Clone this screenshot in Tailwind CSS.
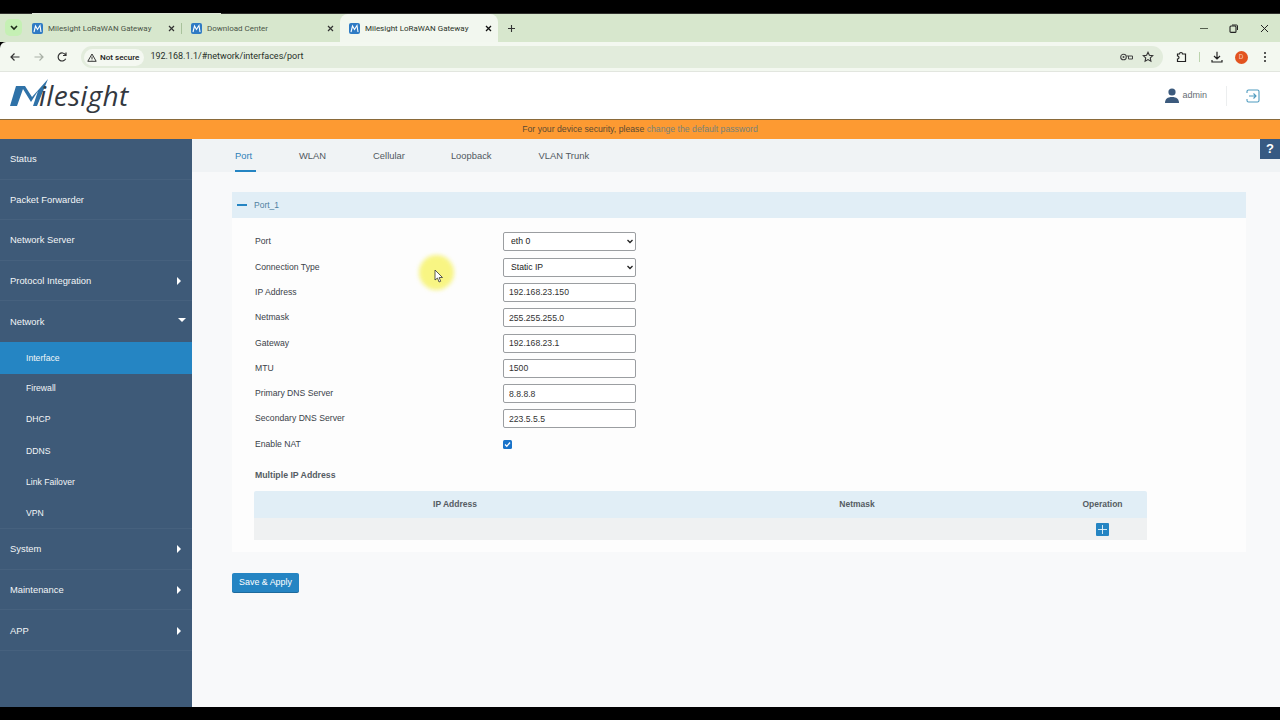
<!DOCTYPE html>
<html lang="en">
<head>
<meta charset="UTF-8">
<script src="https://cdn.jsdelivr.net/npm/@tailwindcss/browser@4"></script>
<title>Milesight LoRaWAN Gateway</title>
</head>
<body class="w-[1280px] h-[720px] overflow-hidden bg-black font-['Liberation_Sans',sans-serif] flex flex-col relative">
  <!-- video letterbox top -->
  <div class="h-[13px] shrink-0 bg-black"></div>
  <div class="h-px shrink-0 bg-[#30302e]"><div class="ml-[32px] w-[189px] h-px bg-[#dfe6da]"></div></div>

  <!-- tab strip -->
  <div class="h-[28px] shrink-0 bg-[#d7e7cd] flex items-start pl-[5px] font-['Roboto',sans-serif] text-[#4a5547] text-[8px]">
    <div class="w-[17px] h-[17px] mt-[5px] rounded-[5px] bg-[#c5f0b4] flex items-center justify-center">
      <svg width="8" height="6" viewBox="0 0 8 6"><path d="M1 1l3 3 3-3" fill="none" stroke="#1d2a18" stroke-width="1.6"/></svg>
    </div>
    <div class="w-[149px] h-[28px] ml-[10px] pt-px flex items-center gap-[5px]">
      <svg class="shrink-0" width="11" height="11" viewBox="0 0 11 11"><rect width="11" height="11" rx="2" fill="#2f7bc4"/><path d="M2 9l1.500-6 2 3.500L8 2.500 9 9" fill="none" stroke="#fff" stroke-width="1.100"/></svg>
      <span class="w-[115px]">Milesight LoRaWAN Gateway</span>
      <svg width="7" height="7" viewBox="0 0 7 7"><path d="M1 1l5 5M6 1L1 6" stroke="#333" stroke-width="1.200"/></svg>
    </div>
    <div class="w-px h-[11px] mt-[9px] bg-[#a9c29c]"></div>
    <div class="w-[149px] h-[28px] ml-[9px] pt-px flex items-center gap-[5px]">
      <svg class="shrink-0" width="11" height="11" viewBox="0 0 11 11"><rect width="11" height="11" rx="2" fill="#2f7bc4"/><path d="M2 9l1.500-6 2 3.500L8 2.500 9 9" fill="none" stroke="#fff" stroke-width="1.100"/></svg>
      <span class="w-[115px]">Download Center</span>
      <svg width="7" height="7" viewBox="0 0 7 7"><path d="M1 1l5 5M6 1L1 6" stroke="#333" stroke-width="1.200"/></svg>
    </div>
    <div class="w-[158px] h-[28px] pl-[9px] pt-px flex items-center gap-[5px] bg-[#f2f7ef] rounded-t-[8px] text-[#2a3328]">
      <svg class="shrink-0" width="11" height="11" viewBox="0 0 11 11"><rect width="11" height="11" rx="2" fill="#2f7bc4"/><path d="M2 9l1.500-6 2 3.500L8 2.500 9 9" fill="none" stroke="#fff" stroke-width="1.100"/></svg>
      <span class="w-[115px]">Milesight LoRaWAN Gateway</span>
      <svg width="7" height="7" viewBox="0 0 7 7"><path d="M1 1l5 5M6 1L1 6" stroke="#111" stroke-width="1.300"/></svg>
    </div>
    <svg class="mt-[10px] ml-[9px]" width="9" height="9" viewBox="0 0 9 9"><path d="M4.500 1v7M1 4.500h7" stroke="#333" stroke-width="1.100"/></svg>
    <div class="ml-auto mt-[10px] flex items-center gap-[21.500px] pr-[11.500px]">
      <div class="w-[8px] h-[1.500px] bg-[#55604f]"></div>
      <svg width="9" height="9" viewBox="0 0 9 9"><rect x="1" y="2" width="6" height="6.400" rx="1" fill="none" stroke="#222" stroke-width="1.100"/><path d="M3 1h4.500a1 1 0 0 1 1 1v4" fill="none" stroke="#222"/></svg>
      <svg width="9" height="9" viewBox="0 0 9 9"><path d="M1 1l7 7M8 1L1 8" stroke="#222"/></svg>
    </div>
  </div>

  <!-- browser toolbar -->
  <div class="h-[30px] shrink-0 bg-[#f3f8f0] rounded-tl-[6px] flex items-center pl-[9px] pt-px border-b border-[#e2e6df] font-['Roboto',sans-serif]">
    <svg width="12" height="12" viewBox="0 0 12 12"><path d="M10.500 6H2M5.500 2.500L2 6l3.500 3.500" fill="none" stroke="#333" stroke-width="1.200"/></svg>
    <svg class="ml-[12px]" width="12" height="12" viewBox="0 0 12 12"><path d="M1.500 6H10M6.500 2.500L10 6l-3.500 3.500" fill="none" stroke="#a9b0a6" stroke-width="1.200"/></svg>
    <svg class="ml-[11px]" width="12" height="12" viewBox="0 0 12 12"><path d="M9.700 7.800A4 4 0 1 1 9.500 3.800M10 1.500v3H7" fill="none" stroke="#333" stroke-width="1.200"/></svg>
    <div class="ml-[13px] w-[1082px] h-[22px] rounded-full bg-[#e2ecdc] flex items-center pl-[3px] pr-[9px]">
      <div class="h-[17px] pl-[3px] pr-[5px] rounded-full bg-[#f4f8f1] flex items-center gap-[3px] text-[8.100px] font-medium text-[#222]">
        <svg width="10" height="9" viewBox="0 0 10 9"><path d="M5 1L.8 8.300h8.400z M5 3.500v2.500M5 6.600v.7" fill="none" stroke="#222" stroke-width=".9"/></svg>
        <span>Not secure</span>
      </div>
      <span class="ml-[6px] text-[9px] text-[#28312a]">192.168.1.1/#network/interfaces/port</span>
      <svg class="ml-auto" width="13" height="8" viewBox="0 0 13 8"><circle cx="3.500" cy="4" r="2.800" fill="none" stroke="#444" stroke-width="1.100"/><circle cx="3.500" cy="4" r="1" fill="#444"/><path d="M6.500 3h6v3h-4V3" fill="none" stroke="#444"/></svg>
      <svg class="ml-[9px]" width="12" height="12" viewBox="0 0 12 12"><path d="M6 1.300l1.400 3 3.300.4-2.400 2.200.6 3.300L6 8.600l-2.900 1.600.6-3.300L1.300 4.700l3.300-.4z" fill="none" stroke="#333" stroke-width="1.100"/></svg>
    </div>
    <svg class="ml-[12px]" width="12" height="13" viewBox="0 0 12 13"><path d="M2.500 3h2a1.500 1.500 0 0 1 3 0h3v7.500h-8V8a1.500 1.500 0 0 0 0-3z" fill="none" stroke="#222" stroke-width="1.200"/></svg>
    <div class="ml-[12px] w-px h-[10px] bg-[#bcd4ae]"></div>
    <svg class="ml-[11px]" width="12" height="12" viewBox="0 0 12 12"><path d="M6 .8v7M3 5l3 3 3-3M1 9v2h10V9" fill="none" stroke="#222" stroke-width="1.200"/></svg>
    <div class="ml-[11.500px] w-[13px] h-[13px] rounded-full bg-[#e2531f] text-[#f7c9b4] text-[7px] flex items-center justify-center">D</div>
    <div class="ml-[16.500px] flex flex-col gap-[2px]">
      <i class="block w-[2px] h-[2px] rounded-full bg-[#222]"></i>
      <i class="block w-[2px] h-[2px] rounded-full bg-[#222]"></i>
      <i class="block w-[2px] h-[2px] rounded-full bg-[#222]"></i>
    </div>
  </div>

  <!-- gateway header -->
  <header class="h-[48px] shrink-0 bg-white flex items-center pl-[10px] pr-[20px] border-b border-[#8a6a3a] relative z-10">
    <div class="relative h-[36px] w-[125px]">
      <svg class="absolute left-0 top-[1px]" width="40" height="28" viewBox="0 0 40 28"><path d="M0 27L6 7h9l7 11L38 0 27 27h-4l5-15-7 11-8-13-6 17z" fill="#2f72a8"/></svg>
      <span class="absolute left-[29px] -top-[1px] text-[28px] leading-[36px] italic text-[#33383f] font-['Open_Sans',sans-serif] font-normal tracking-[0.3px]">ilesight</span>
    </div>
    <svg class="ml-auto" width="14" height="15" viewBox="0 0 14 15"><circle cx="7" cy="4" r="3.600" fill="#3c5a7d"/><path d="M0 15c0-4 2.500-6 7-6s7 2 7 6z" fill="#3c5a7d"/></svg>
    <span class="ml-[3px] text-[9px] text-[#666d74]">admin</span>
    <div class="ml-[19px] w-px h-[20px] bg-[#eceeef]"></div>
    <svg class="ml-[19px]" width="14" height="14" viewBox="0 0 14 14"><path d="M1 4V2.500A1.500 1.500 0 0 1 2.500 1h9A1.500 1.500 0 0 1 13 2.500v9a1.500 1.500 0 0 1-1.500 1.500h-9A1.500 1.500 0 0 1 1 11.500V10M3 7h7M7.500 4.500L10 7l-2.500 2.500" fill="none" stroke="#4f9bbf" stroke-width="1.100"/></svg>
  </header>

  <!-- notice -->
  <div class="h-[19px] shrink-0 bg-[#fd9a32] flex items-center justify-center text-[8.700px] text-[#5a4a33]">
    For your device security, please&nbsp;<span class="text-[#76827a]">change the default password</span>
  </div>

  <div class="h-[568px] shrink-0 flex text-[8.640px] text-[#3b4249]">
    <!-- sidebar -->
    <nav class="w-[192px] shrink-0 bg-[#3e5a78] text-[#f2f5f7] text-[9.400px]">
      <div class="h-[40.600px] pt-px flex items-center pl-[10px] border-b border-[#46617e]">Status</div>
      <div class="h-[40.600px] pt-px flex items-center pl-[10px] border-b border-[#46617e]">Packet Forwarder</div>
      <div class="h-[40.600px] pt-px flex items-center pl-[10px] border-b border-[#46617e]">Network Server</div>
      <div class="h-[40.600px] pt-px flex items-center pl-[10px] pr-[11px] justify-between border-b border-[#46617e]">Protocol Integration<span class="w-0 h-0 border-y-[4px] border-y-transparent border-l-[4px] border-l-white"></span></div>
      <div class="h-[40.600px] pt-px flex items-center pl-[10px] pr-[6px] justify-between">Network<span class="w-0 h-0 -mt-[4px] border-x-[4.500px] border-x-transparent border-t-[4px] border-t-white"></span></div>
      <div class="h-[32px] pt-px flex items-center pl-[26px] bg-[#2585c3] text-[8.650px] font-medium">Interface</div>
      <div class="h-[29px] pt-px flex items-center pl-[26px] text-[8.650px]">Firewall</div>
      <div class="h-[31.300px] mt-[1px] flex items-center pl-[26px] text-[8.650px]">DHCP</div>
      <div class="h-[31.300px] pt-px flex items-center pl-[26px] text-[8.650px]">DDNS</div>
      <div class="h-[31.300px] flex items-center pl-[26px] text-[8.650px]">Link Failover</div>
      <div class="h-[31.300px] flex items-center pl-[26px] text-[8.650px] border-b border-[#46617e]">VPN</div>
      <div class="h-[40.600px] pt-px flex items-center pl-[10px] pr-[11px] justify-between border-b border-[#46617e]">System<span class="w-0 h-0 border-y-[4px] border-y-transparent border-l-[4px] border-l-white"></span></div>
      <div class="h-[40.600px] pt-px flex items-center pl-[10px] pr-[11px] justify-between border-b border-[#46617e]">Maintenance<span class="w-0 h-0 border-y-[4px] border-y-transparent border-l-[4px] border-l-white"></span></div>
      <div class="h-[40.600px] pt-px flex items-center pl-[10px] pr-[11px] justify-between border-b border-[#46617e]">APP<span class="w-0 h-0 border-y-[4px] border-y-transparent border-l-[4px] border-l-white"></span></div>
    </nav>

    <!-- main -->
    <main class="flex-1 bg-[#f8f9fa] relative">
      <div class="h-[33px] bg-[#f0f3f5] flex pl-[43px] gap-[43px] text-[9.400px] text-[#50585f]">
        <div class="h-[33px] pt-[10px] text-[#2d80b8] border-b-2 border-[#2585c3] w-[21px]">Port</div>
        <div class="pt-[10px]">WLAN</div>
        <div class="pt-[10px] ml-[4px]">Cellular</div>
        <div class="pt-[10px] ml-[3px]">Loopback</div>
        <div class="pt-[10px] ml-[4px]">VLAN Trunk</div>
      </div>
      <div class="absolute right-0 top-0 w-[20px] h-[20px] bg-[#375a83] text-white font-bold text-[13px] flex items-center justify-center">?</div>

      <section class="ml-[40px] mr-[34px] mt-[20px] bg-[#fdfdfd] h-[360px]">
        <div class="h-[26px] bg-[#e1eef6] flex items-center pl-[5px] gap-[7px] text-[#4f7f9f] text-[8.500px]">
          <span class="w-[10px] h-[2px] bg-[#2585c3]"></span>
          <span>Port_1</span>
        </div>
        <div class="ml-[22px] mt-[14.400px] flex flex-col gap-[6.300px]">
          <div class="h-[19px] flex items-center"><label class="w-[248px] ml-px">Port</label>
            <div class="relative">
              <select class="block appearance-none w-[133px] h-[19px] bg-white border border-[#9b9ea1] rounded-[2px] px-[7px] text-[#222]"><option>eth 0</option></select>
              <svg class="absolute right-[3px] top-[7px]" width="6" height="5" viewBox="0 0 6 5"><path d="M.5 1L3 3.500 5.500 1" fill="none" stroke="#222" stroke-width="1.300"/></svg>
            </div></div>
          <div class="h-[19px] flex items-center"><label class="w-[248px] ml-px">Connection Type</label>
            <div class="relative">
              <select class="block appearance-none w-[133px] h-[19px] bg-white border border-[#9b9ea1] rounded-[2px] px-[7px] text-[#222]"><option>Static IP</option></select>
              <svg class="absolute right-[3px] top-[7px]" width="6" height="5" viewBox="0 0 6 5"><path d="M.5 1L3 3.500 5.500 1" fill="none" stroke="#222" stroke-width="1.300"/></svg>
            </div></div>
          <div class="h-[19px] flex items-center"><label class="w-[248px] ml-px">IP Address</label>
            <input class="w-[133px] h-[19px] bg-white border border-[#9b9ea1] rounded-[2px] px-[5px] text-[#333]" value="192.168.23.150"></div>
          <div class="h-[19px] flex items-center"><label class="w-[248px] ml-px">Netmask</label>
            <input class="w-[133px] h-[19px] bg-white border border-[#9b9ea1] rounded-[2px] px-[5px] text-[#333]" value="255.255.255.0"></div>
          <div class="h-[19px] flex items-center"><label class="w-[248px] ml-px">Gateway</label>
            <input class="w-[133px] h-[19px] bg-white border border-[#9b9ea1] rounded-[2px] px-[5px] text-[#333]" value="192.168.23.1"></div>
          <div class="h-[19px] flex items-center"><label class="w-[248px] ml-px">MTU</label>
            <input class="w-[133px] h-[19px] bg-white border border-[#9b9ea1] rounded-[2px] px-[5px] text-[#333]" value="1500"></div>
          <div class="h-[19px] flex items-center"><label class="w-[248px] ml-px">Primary DNS Server</label>
            <input class="w-[133px] h-[19px] bg-white border border-[#9b9ea1] rounded-[2px] px-[5px] text-[#333]" value="8.8.8.8"></div>
          <div class="h-[19px] flex items-center"><label class="w-[248px] ml-px">Secondary DNS Server</label>
            <input class="w-[133px] h-[19px] bg-white border border-[#9b9ea1] rounded-[2px] px-[5px] text-[#333]" value="223.5.5.5"></div>
          <div class="h-[19px] flex items-center"><label class="w-[248px] ml-px">Enable NAT</label>
            <span class="w-[9px] h-[9px] mt-px rounded-[1.500px] bg-[#1a73c9] flex items-center justify-center"><svg width="7" height="7" viewBox="0 0 7 7"><path d="M1 3.500l1.800 1.800L6 1.500" fill="none" stroke="#fff" stroke-width="1.300"/></svg></span></div>
        </div>
        <div class="ml-[23px] mt-[15.600px] font-bold text-[8.740px] text-[#555c63]">Multiple IP Address</div>
        <div class="ml-[22px] mt-[8.600px] w-[893px]">
          <div class="h-[27px] bg-[#e1eef6] rounded-t-[2px] flex items-center font-bold text-[8.500px] text-[#555c63] text-center">
            <span class="w-[402px]">IP Address</span><span class="w-[402px]">Netmask</span><span class="w-[89px]">Operation</span>
          </div>
          <div class="h-[22px] bg-[#eff1f2] flex items-center justify-end pr-[38px]">
            <span class="w-[13px] h-[13px] bg-[#2585c3] rounded-[1px] flex items-center justify-center"><svg width="9" height="9" viewBox="0 0 9 9"><path d="M4.500 0v9M0 4.500h9" stroke="#e8f4fb" stroke-width=".9"/></svg></span>
          </div>
        </div>
      </section>

      <button class="block ml-[40px] mt-[21px] w-[67px] h-[19px] bg-[#2585c3] rounded-[2px] text-white text-[8.900px] shadow-[0_1px_0_#1d6a9c]">Save &amp; Apply</button>

      <!-- screen recorder cursor highlight -->
      <div class="absolute left-[227px] top-[116px] w-[35px] h-[35px] rounded-full bg-[#f6f25a]/75 blur-[2px]"></div>
      <svg class="absolute left-[242px] top-[130px]" width="9" height="14" viewBox="0 0 9 14"><path d="M1 1v10l2.500-2 1.500 4 1.700-.7-1.500-3.800H8.500z" fill="#fff" stroke="#333" stroke-width=".8"/></svg>
    </main>
  </div>
  <div class="flex-1 bg-black"></div>
</body>
</html>
